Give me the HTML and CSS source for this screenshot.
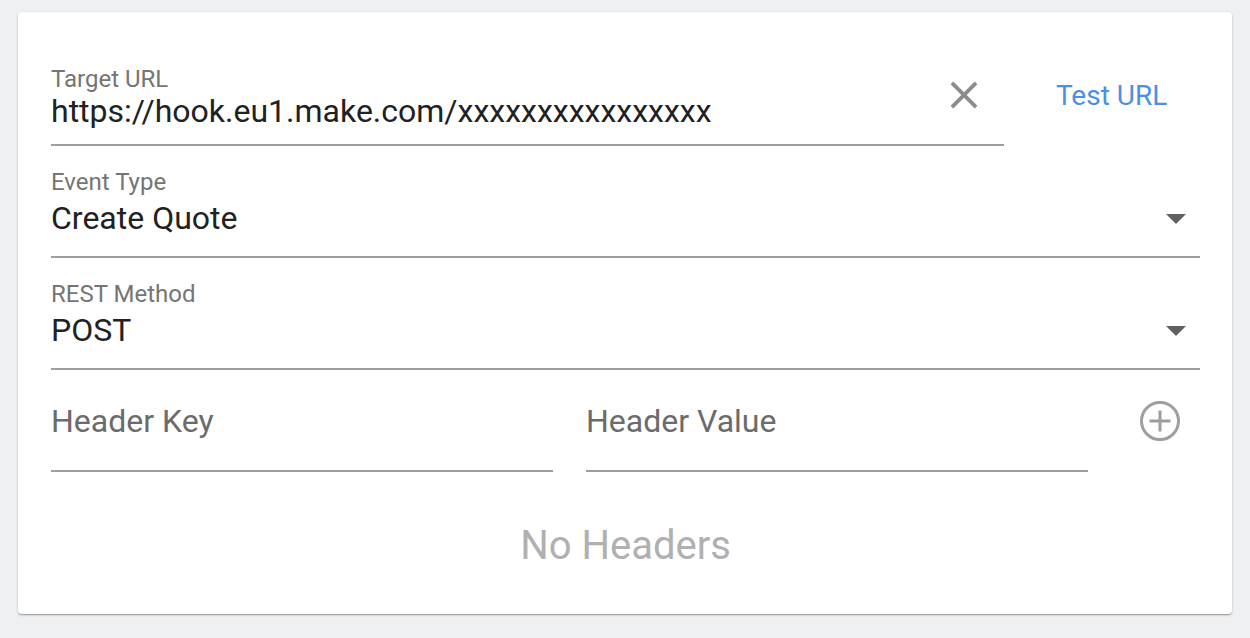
FILE: index.html
```html
<!DOCTYPE html>
<html>
<head>
<meta charset="utf-8">
<link rel="stylesheet" href="styles.css">
</head>
<body>
<div class="card">
  <div class="row">
    <div class="field field-url">
      <div class="label">Target URL</div>
      <div class="input-row">
        <div class="value">https://hook.eu1.make.com/xxxxxxxxxxxxxxxx</div>
        <span class="clear-icon">
          <svg width="46" height="46" viewBox="0 0 24 24"><path fill="#8c8c8c" d="M19 6.41L17.59 5 12 10.59 6.41 5 5 6.41 10.59 12 5 17.59 6.41 19 12 13.41 17.59 19 19 17.59 13.41 12z"/></svg>
        </span>
      </div>
    </div>
    <div class="test-url">Test URL</div>
  </div>

  <div class="field field-select">
    <div class="label">Event Type</div>
    <div class="input-row">
      <div class="value">Create Quote</div>
      <span class="arrow"><svg width="48" height="48" viewBox="0 0 24 24"><path fill="#616161" d="M7 10l5 5 5-5z"/></svg></span>
    </div>
  </div>

  <div class="field field-select">
    <div class="label">REST Method</div>
    <div class="input-row">
      <div class="value">POST</div>
      <span class="arrow"><svg width="48" height="48" viewBox="0 0 24 24"><path fill="#616161" d="M7 10l5 5 5-5z"/></svg></span>
    </div>
  </div>

  <div class="header-row">
    <div class="hfield hkey"><div class="placeholder">Header Key</div></div>
    <div class="hfield hval"><div class="placeholder">Header Value</div></div>
    <span class="add-icon">
      <svg width="40" height="40" viewBox="0 0 40 40"><circle cx="20" cy="20" r="18.5" fill="none" stroke="#9e9e9e" stroke-width="3"/><path d="M20 9.5v21M9.5 20h21" stroke="#9e9e9e" stroke-width="3"/></svg>
    </span>
  </div>

  <div class="empty">No Headers</div>
</div>
</body>
</html>
```

FILE: styles.css
```css
html, body {
  margin: 0;
  padding: 0;
}
body {
  background: #eef0f2;
  font-family: Roboto, "Noto Sans", sans-serif;
  width: 1250px;
  height: 638px;
  overflow: hidden;
}
.card {
  margin: 12px 0 0 18px;
  width: 1214px;
  height: 602px;
  box-sizing: border-box;
  background: #fff;
  border-radius: 4px;
  box-shadow: 0 1px 3px rgba(0,0,0,0.2), 0 1px 1px rgba(0,0,0,0.14), 0 2px 1px -1px rgba(0,0,0,0.12);
  padding: 56px 32px 0 33px;
}
.row {
  display: flex;
  align-items: flex-start;
}
.field {
  border-bottom: 2px solid #9e9e9e;
}
.field-url {
  width: 953px;
  padding-bottom: 13px;
}
.label {
  font-size: 24px;
  line-height: 23px;
  color: #757575;
}
.input-row {
  display: flex;
  align-items: center;
  height: 40px;
}
.value {
  font-size: 32px;
  line-height: 40px;
  color: #212121;
  flex: 1;
  white-space: nowrap;
}
.clear-icon {
  display: flex;
  margin-right: 17px;
  margin-top: -32px;
  height: 46px;
  align-items: center;
}
.test-url {
  margin-left: 52px;
  font-size: 28px;
  line-height: 36px;
  color: #4a90e2;
  margin-top: 10px;
}
.field-select {
  margin-top: 24px;
  padding-bottom: 18px;
}
.field-select .label {
  line-height: 24px;
  margin-bottom: 4px;
}
.arrow {
  display: flex;
  height: 48px;
  align-items: center;
}
.header-row {
  display: flex;
  align-items: flex-start;
  margin-top: 24px;
}
.hfield {
  border-bottom: 2px solid #9e9e9e;
  height: 78px;
  box-sizing: border-box;
  padding-top: 7px;
}
.hkey {
  width: 502px;
}
.hval {
  width: 502px;
  margin-left: 33px;
}
.placeholder {
  font-size: 32px;
  line-height: 40px;
  color: #6b6b6b;
}
.add-icon {
  display: flex;
  margin-left: auto;
  margin-right: 20px;
  margin-top: 7px;
}
.empty {
  text-align: center;
  font-size: 40px;
  line-height: 48px;
  color: #b0b0b0;
  margin-top: 50px;
}
```
